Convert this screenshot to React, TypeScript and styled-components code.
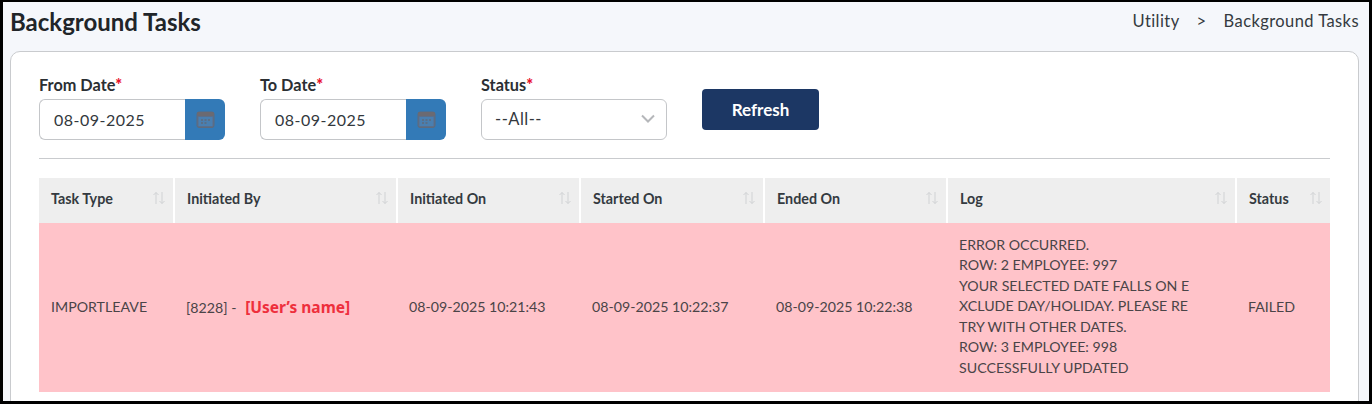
import React from "react";
import styled, { createGlobalStyle } from "styled-components";

const GlobalStyle = createGlobalStyle`
  html, body {
    margin: 0;
    padding: 0;
    background: #000;
    font-family: "Lato", "Noto Sans", sans-serif;
  }
  * { box-sizing: border-box; }
`;

const columns = [
  { title: "Task Type", width: 135 },
  { title: "Initiated By", width: 223 },
  { title: "Initiated On", width: 183 },
  { title: "Started On", width: 184 },
  { title: "Ended On", width: 183 },
  { title: "Log", width: 289 },
  { title: "Status", width: 94 },
];

const logLines = [
  "ERROR OCCURRED.",
  "ROW: 2 EMPLOYEE: 997",
  "YOUR SELECTED DATE FALLS ON E",
  "XCLUDE DAY/HOLIDAY. PLEASE RE",
  "TRY WITH OTHER DATES.",
  "ROW: 3 EMPLOYEE: 998",
  "SUCCESSFULLY UPDATED",
];

const CalendarIcon = () => (
  <svg width="19" height="19" viewBox="0 0 19 19" fill="none">
    <rect x="1" y="2" width="17" height="15.5" rx="2" fill="#5a6f8c" stroke="#5f6b7c" />
    <rect x="1" y="2" width="17" height="4" rx="1.5" fill="#6b6a72" />
    <rect x="2.5" y="7" width="14" height="9" fill="#4a7fb0" />
    <path d="M5 10h2M8.5 10h2M12 10h2M5 13h2M8.5 13h2" stroke="#5f6b7c" strokeWidth="1.6" />
  </svg>
);

const SortIcon = () => (
  <svg width="14" height="14" viewBox="0 0 14 14" fill="none" stroke="#d0d2d4" strokeWidth="1">
    <path d="M4 13V1.5M1.5 4L4 1.5L6.5 4" />
    <path d="M10 1v11.5M7.5 10L10 12.5L12.5 10" />
  </svg>
);

const Chevron = () => (
  <svg width="14" height="9" viewBox="0 0 14 9" fill="none" stroke="#b5b7ba" strokeWidth="2">
    <path d="M1 1.5L7 7.5L13 1.5" />
  </svg>
);

const DateField: React.FC<{ label: string; value: string }> = ({ label, value }) => (
  <Field>
    <Label>
      {label}
      <Required>*</Required>
    </Label>
    <InputGroup>
      <DateValue>{value}</DateValue>
      <CalendarButton>
        <CalendarIcon />
      </CalendarButton>
    </InputGroup>
  </Field>
);

export default function App() {
  return (
    <Frame>
      <GlobalStyle />
      <Page>
        <TopBar>
          <Title>Background Tasks</Title>
          <Breadcrumb>
            <span>Utility</span>
            <span>&gt;</span>
            <span>Background Tasks</span>
          </Breadcrumb>
        </TopBar>
        <Card>
          <FilterRow>
            <DateField label="From Date" value="08-09-2025" />
            <DateField label="To Date" value="08-09-2025" />
            <Field>
              <Label>
                Status
                <Required>*</Required>
              </Label>
              <SelectBox>
                --All--
                <Chevron />
              </SelectBox>
            </Field>
            <RefreshButton>Refresh</RefreshButton>
          </FilterRow>
          <Divider />
          <Table>
            <colgroup>
              {columns.map((col) => (
                <col key={col.title} width={col.width} />
              ))}
            </colgroup>
            <thead>
              <tr>
                {columns.map((col) => (
                  <HeadCell key={col.title}>
                    <HeadInner>
                      {col.title}
                      <SortIcon />
                    </HeadInner>
                  </HeadCell>
                ))}
              </tr>
            </thead>
            <tbody>
              <tr>
                <BodyCell>IMPORTLEAVE</BodyCell>
                <BodyCell>
                  [8228] - <UserName>[User’s name]</UserName>
                </BodyCell>
                <BodyCell>08-09-2025 10:21:43</BodyCell>
                <BodyCell>08-09-2025 10:22:37</BodyCell>
                <BodyCell>08-09-2025 10:22:38</BodyCell>
                <BodyCell>
                  {logLines.map((line) => (
                    <LogLine key={line}>{line}</LogLine>
                  ))}
                </BodyCell>
                <BodyCell>FAILED</BodyCell>
              </tr>
            </tbody>
          </Table>
        </Card>
      </Page>
    </Frame>
  );
}

const Frame = styled.div`
  width: 1372px;
  height: 404px;
  background: #000;
  padding: 2px 3px 3px 3px;
  overflow: hidden;
`;

const Page = styled.div`
  height: 100%;
  background: #f5f7fb;
  padding: 0 10px 0 7px;
  overflow: hidden;
`;

const TopBar = styled.div`
  display: flex;
  justify-content: space-between;
  align-items: center;
  height: 39px;
`;

const Title = styled.h1`
  margin: 0;
  font-size: 24px;
  font-weight: 700;
  color: #212529;
`;

const Breadcrumb = styled.div`
  display: flex;
  gap: 17px;
  font-size: 16.5px;
  letter-spacing: 0.42px;
  color: #343a40;
  margin-top: -1px;
`;

const Card = styled.div`
  margin-top: 10px;
  height: 400px;
  background: #fff;
  border: 1px solid #c9cbce;
  border-radius: 10px;
  padding: 19px 28px;
`;

const FilterRow = styled.div`
  display: flex;
  gap: 35px;
  align-items: flex-start;
`;

const Field = styled.div`
  width: 186px;
  display: flex;
  flex-direction: column;
`;

const Label = styled.div`
  font-size: 16.3px;
  font-weight: 700;
  line-height: 27px;
  margin-bottom: 1px;
  color: #2b2f33;
`;

const Required = styled.span`
  font-weight: 900;
  color: #e8112d;
`;

const InputGroup = styled.div`
  display: flex;
  height: 41px;
`;

const DateValue = styled.div`
  flex: 1;
  display: flex;
  align-items: center;
  padding-left: 14px;
  font-size: 16px;
  letter-spacing: 0.5px;
  color: #33383d;
  border: 1px solid #c4c6c9;
  border-right: none;
  border-radius: 6px 0 0 6px;
`;

const CalendarButton = styled.div`
  width: 40px;
  display: flex;
  align-items: center;
  justify-content: center;
  background: #337ab7;
  border-radius: 0 6px 6px 0;
`;

const SelectBox = styled.div`
  height: 41px;
  display: flex;
  align-items: center;
  justify-content: space-between;
  padding: 0 11px 2px 13px;
  font-size: 16.5px;
  letter-spacing: 0.5px;
  color: #33383d;
  border: 1px solid #c4c6c9;
  border-radius: 6px;
`;

const RefreshButton = styled.button`
  width: 117px;
  height: 41px;
  margin-top: 18px;
  border: none;
  border-radius: 4px;
  background: #1c3764;
  color: #fff;
  font-family: inherit;
  font-size: 17px;
  font-weight: 700;
`;

const Divider = styled.div`
  height: 1px;
  margin-top: 18px;
  background: #c9cbce;
`;

const Table = styled.table`
  width: 1291px;
  margin-top: 19px;
  table-layout: fixed;
  border-collapse: collapse;
`;

const HeadCell = styled.th`
  height: 45px;
  padding: 0 7px 5px 12px;
  background: #eeeeee;
  border-right: 2px solid #fff;
  font-size: 14.3px;
  font-weight: 700;
  text-align: left;
  color: #343a40;

  &:last-child {
    border-right: none;
  }
`;

const HeadInner = styled.div`
  display: flex;
  align-items: center;
  justify-content: space-between;
`;

const BodyCell = styled.td`
  height: 169px;
  padding: 0 12px 2px;
  background: #ffc3c9;
  font-size: 14.2px;
  color: #4a4447;
  vertical-align: middle;
`;

const LogLine = styled.div`
  line-height: 20.4px;
  white-space: nowrap;
`;

const UserName = styled.span`
  margin-left: 5px;
  font-family: "Noto Sans", sans-serif;
  font-size: 15.5px;
  font-weight: 700;
  color: #ee2f3c;
`;
